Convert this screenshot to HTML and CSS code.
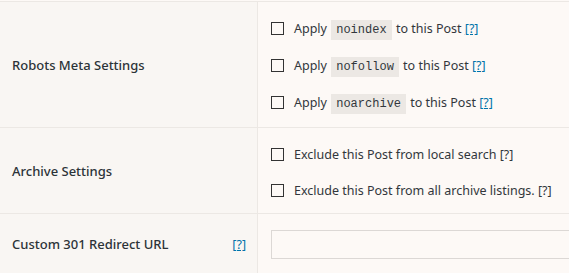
FILE: index.html
```html
<!DOCTYPE html>
<html lang="en">
<head>
    <meta charset="UTF-8">
    <meta name="viewport" content="width=device-width, initial-scale=1.0">
    <title>Post SEO Settings</title>
    <link rel="stylesheet" href="styles.css">
</head>
<body>
    <div class="settings">
        <div class="row robots">
            <div class="label">Robots Meta Settings</div>
            <div class="field">
                <label class="option"><input type="checkbox"> <span>Apply <code>noindex</code> to this Post <a href="#">[?]</a></span></label>
                <label class="option"><input type="checkbox"> <span>Apply <code>nofollow</code> to this Post <a href="#">[?]</a></span></label>
                <label class="option"><input type="checkbox"> <span>Apply <code>noarchive</code> to this Post <a href="#">[?]</a></span></label>
            </div>
        </div>
        <div class="row archive">
            <div class="label">Archive Settings</div>
            <div class="field">
                <label class="option"><input type="checkbox"> <span>Exclude this Post from local search [?]</span></label>
                <label class="option"><input type="checkbox"> <span>Exclude this Post from all archive listings. [?]</span></label>
            </div>
        </div>
        <div class="row redirect">
            <div class="label">
                <span>Custom 301 Redirect URL</span>
                <a href="#">[?]</a>
            </div>
            <div class="field">
                <input type="text" class="url">
            </div>
        </div>
    </div>
</body>
</html>
```

FILE: styles.css
```css
body {
    margin: 0;
    padding-top: 1px;
    background: #fdf9f6;
    font-family: "Noto Sans", "Open Sans", sans-serif;
    font-size: 12.5px;
    color: #32373c;
}
.settings {
    border-top: 1px solid #ece8e4;
}
.row {
    display: grid;
    grid-template-columns: 258px 1fr;
    border-bottom: 1px solid #ece8e4;
}
.label {
    background: #f9f6f3;
    border-right: 1px solid #ece8e4;
    padding-left: 12px;
    padding-right: 11px;
    display: flex;
    align-items: center;
    justify-content: space-between;
    font-size: 13px;
    font-weight: 500;
    color: #2c3338;
}
.field {
    padding-left: 13px;
}
.robots .field {
    padding-top: 8px;
    padding-bottom: 6px;
}
.archive .field {
    padding-top: 8px;
    padding-bottom: 5px;
}
.redirect {
    border-bottom: none;
    height: 60px;
}
.redirect .field {
    padding-top: 16px;
}
.redirect .label a {
    font-size: 12.5px;
    font-weight: 400;
}
.option {
    display: flex;
    align-items: center;
    height: 37px;
    white-space: nowrap;
}
.archive .option {
    height: 36px;
}
.option input {
    appearance: none;
    -webkit-appearance: none;
    width: 13px;
    height: 13px;
    margin: 0 10px 0 0;
    border: 1px solid #333;
    background: transparent;
}
code {
    font-family: "Liberation Mono", "DejaVu Sans Mono", monospace;
    font-size: 12px;
    background: #ece8e4;
    padding: 3px 5px 3px;
    margin: 0 1px;
    color: #32373c;
}
a {
    color: #0073aa;
}
.url {
    display: block;
    box-sizing: border-box;
    width: 320px;
    height: 29px;
    margin: 0;
    border: 1px solid #dcd8d5;
    background: #fdf9f6;
}
```
